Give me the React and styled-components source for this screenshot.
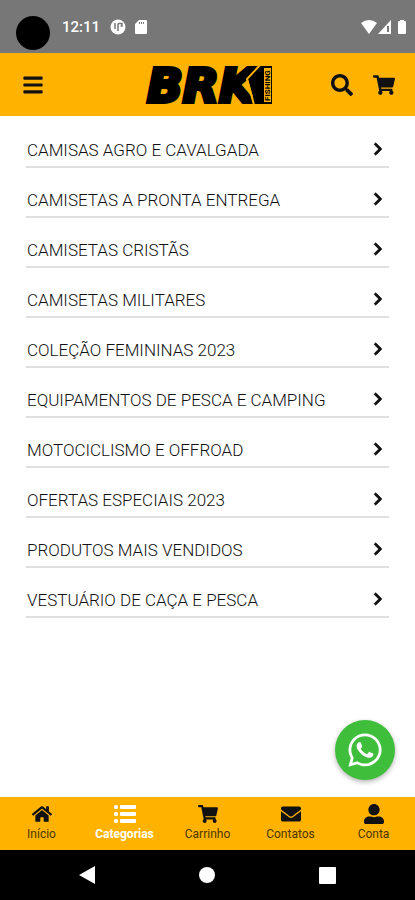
import React from "react";
import styled, { createGlobalStyle } from "styled-components";
import {
  FaBars,
  FaSearch,
  FaShoppingCart,
  FaChevronRight,
  FaWhatsapp,
  FaHome,
  FaEnvelope,
  FaUserAlt
} from "react-icons/fa";

const GlobalStyle = createGlobalStyle`
  * {
    box-sizing: border-box;
  }
  body {
    margin: 0;
    background-color: white;
    font-family: Roboto, sans-serif;
  }
`;

const Screen = styled.div`
  display: flex;
  flex-direction: column;
  min-height: 100vh;
`;

const StatusBar = styled.div`
  display: flex;
  align-items: center;
  height: 53px;
  padding: 0 8px 0 16px;
  background-color: #777777;
  color: white;
`;

const Camera = styled.div`
  width: 34px;
  height: 34px;
  margin-top: 12px;
  border-radius: 50%;
  background-color: black;
`;

const Clock = styled.span`
  margin: 0 10px 0 12px;
  font-size: 15px;
  font-weight: 500;
`;

const StatusIcons = styled.div`
  display: flex;
  align-items: center;
  gap: ${props => props.$gap};
  margin-left: ${props => (props.$right ? "auto" : 0)};
`;

const Header = styled.header`
  display: flex;
  align-items: center;
  justify-content: space-between;
  height: 63px;
  padding: 0 20px 0 22px;
  background-color: #ffb300;
`;

const HeaderSide = styled.div`
  display: flex;
  flex: 1;
  gap: 20px;
  justify-content: ${props => (props.$end ? "flex-end" : "flex-start")};
`;

const IconButton = styled.button`
  display: flex;
  padding: 0;
  border: 0;
  background: none;
  color: #111111;
  font-size: 22px;
`;

const LogoLink = styled.a`
  display: flex;
`;

const LogoWord = styled.text`
  font-family: "DejaVu Sans", sans-serif;
  font-size: 47px;
  font-style: italic;
  font-weight: 700;
  stroke: black;
  stroke-width: 4px;
`;

const LogoTag = styled.text`
  font-family: Roboto, sans-serif;
  font-size: 8px;
  font-weight: 700;
`;

const Main = styled.main`
  flex: 1;
  padding: 2px 26px 0;
`;

const CategoryList = styled.ul`
  margin: 0;
  padding: 0;
  list-style: none;
`;

const CategoryLink = styled.a`
  display: flex;
  align-items: flex-end;
  justify-content: space-between;
  height: 50px;
  padding: 0 4px 6px 1px;
  border-bottom: 2px solid #e0e0e0;
  color: #111111;
  font-size: 17px;
  font-weight: 300;
  line-height: 20px;
  text-decoration: none;
  svg {
    margin-bottom: 4px;
    font-size: 14px;
    stroke: #111111;
    stroke-width: 32px;
  }
`;

const BottomArea = styled.div`
  position: sticky;
  bottom: 0;
`;

const WhatsappButton = styled.a`
  position: absolute;
  right: 20px;
  bottom: 120px;
  display: flex;
  align-items: center;
  justify-content: center;
  width: 60px;
  height: 60px;
  border-radius: 50%;
  background-color: #3fbe3c;
  box-shadow: 0 2px 5px rgba(0, 0, 0, 0.3);
  color: white;
  font-size: 38px;
`;

const TabBar = styled.nav`
  display: grid;
  grid-template-columns: repeat(5, 1fr);
  height: 53px;
  background-color: #ffb300;
`;

const Tab = styled.a`
  display: flex;
  flex-direction: column;
  align-items: center;
  gap: 2px;
  padding-top: 7px;
  color: ${props => (props.$active ? "white" : "#4d3600")};
  font-size: 12px;
  font-weight: ${props => (props.$active ? 700 : 400)};
  line-height: 16px;
  text-decoration: none;
  svg {
    color: ${props => (props.$active ? "white" : "#111111")};
    font-size: 20px;
  }
`;

const SystemBar = styled.div`
  display: flex;
  align-items: center;
  justify-content: center;
  gap: 104px;
  height: 50px;
  background-color: black;
`;

const categories = [
  "CAMISAS AGRO E CAVALGADA",
  "CAMISETAS A PRONTA ENTREGA",
  "CAMISETAS CRISTÃS",
  "CAMISETAS MILITARES",
  "COLEÇÃO FEMININAS 2023",
  "EQUIPAMENTOS DE PESCA E CAMPING",
  "MOTOCICLISMO E OFFROAD",
  "OFERTAS ESPECIAIS 2023",
  "PRODUTOS MAIS VENDIDOS",
  "VESTUÁRIO DE CAÇA E PESCA"
];

const ListIcon = () => (
  <svg width="22" height="20" viewBox="0 0 22 20" fill="currentColor">
    {[1, 8, 15].map(y => (
      <React.Fragment key={y}>
        <rect x="0" y={y} width="4" height="4" rx="1.5" />
        <rect x="6" y={y} width="16" height="4" rx="1" />
      </React.Fragment>
    ))}
  </svg>
);

const tabs = [
  { label: "Início", Icon: FaHome },
  { label: "Categorias", Icon: ListIcon, active: true },
  { label: "Carrinho", Icon: FaShoppingCart },
  { label: "Contatos", Icon: FaEnvelope },
  { label: "Conta", Icon: FaUserAlt }
];

const Logo = () => (
  <svg width="128" height="62" viewBox="0 -12 128 62">
    <LogoWord x="2" y="36">
      BRK
    </LogoWord>
    <path d="M117 0V38H110L103 13L115 0Z" />
    <path d="M117 -3L102 13L109 39" fill="none" stroke="#ffb300" strokeWidth="2" />
    <path d="M117 0h10v38h-10z" />
    <path d="M119 2h7v34h-7z" fill="#ffb300" />
    <LogoTag x="-35" y="125" transform="rotate(-90)">
      FISHING
    </LogoTag>
  </svg>
);

const App = () => (
  <Screen>
    <GlobalStyle />
    <StatusBar>
      <Camera />
      <Clock>12:11</Clock>
      <StatusIcons $gap="9px">
        <svg width="16" height="16" viewBox="0 0 16 16">
          <circle cx="8" cy="8" r="7.5" fill="white" />
          <path d="M5 4v6M8 12V4.500M8 4.500h4v2.500h-1.500" stroke="#777777" strokeWidth="1.500" fill="none" />
        </svg>
        <svg width="12" height="14" viewBox="0 0 12 14">
          <path d="M4 0h7q1 0 1 1v12q0 1-1 1H1q-1 0-1-1V4z" fill="white" />
          <path d="M4.500 2v2M6.500 2v2M8.500 2v2" stroke="#777777" />
        </svg>
      </StatusIcons>
      <StatusIcons $gap="1px" $right>
        <svg width="16" height="14" viewBox="0 0 16 14">
          <path d="M0 3Q8-3 16 3L8 14z" fill="white" />
        </svg>
        <svg width="13" height="14" viewBox="0 0 13 14">
          <path d="M13 0v14H0z" fill="white" />
          <path d="M10 6v6" stroke="#777777" strokeWidth="2" />
        </svg>
        <svg width="15" height="14" viewBox="1 0 15 14">
          <path d="M9 0h4v1h1q1 0 1 1v11q0 1-1 1H8q-1 0-1-1V2q0-1 1-1h1z" fill="white" />
        </svg>
      </StatusIcons>
    </StatusBar>
    <Header>
      <HeaderSide>
        <IconButton aria-label="Menu">
          <FaBars />
        </IconButton>
      </HeaderSide>
      <LogoLink href="#" aria-label="BRK Fishing">
        <Logo />
      </LogoLink>
      <HeaderSide $end>
        <IconButton aria-label="Buscar">
          <FaSearch />
        </IconButton>
        <IconButton aria-label="Carrinho">
          <FaShoppingCart />
        </IconButton>
      </HeaderSide>
    </Header>
    <Main>
      <CategoryList>
        {categories.map(name => (
          <li key={name}>
            <CategoryLink href="#">
              {name}
              <FaChevronRight />
            </CategoryLink>
          </li>
        ))}
      </CategoryList>
    </Main>
    <BottomArea>
      <WhatsappButton href="#" aria-label="WhatsApp">
        <FaWhatsapp />
      </WhatsappButton>
      <TabBar>
        {tabs.map(({ label, Icon, active }) => (
          <Tab href="#" key={label} $active={active}>
            <Icon />
            {label}
          </Tab>
        ))}
      </TabBar>
      <SystemBar>
        <svg width="16" height="18" viewBox="0 0 16 18">
          <path d="M16 0v18L0 9z" fill="white" />
        </svg>
        <svg width="16" height="16" viewBox="0 0 16 16">
          <circle cx="8" cy="8" r="8" fill="white" />
        </svg>
        <svg width="17" height="17" viewBox="0 0 17 17">
          <rect width="17" height="17" rx="1" fill="white" />
        </svg>
      </SystemBar>
    </BottomArea>
  </Screen>
);

export default App;
